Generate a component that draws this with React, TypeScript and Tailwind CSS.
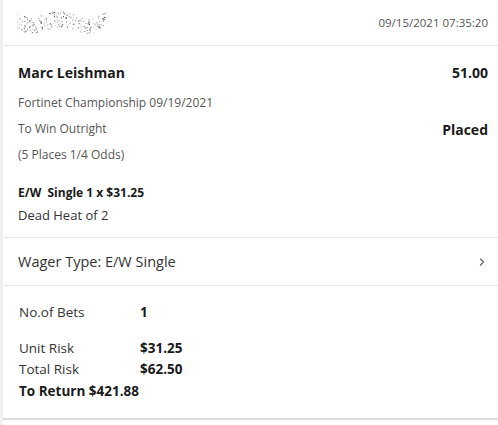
import { ChevronRight } from "lucide-react";

// blurred account name: deterministic speckle
const dots = Array.from({ length: 220 }, (_, i) => {
  const a = Math.sin(i * 12.9898) * 43758.5453;
  const b = Math.sin(i * 78.233) * 12345.6789;
  const x = (a - Math.floor(a)) * 88;
  const y = 6 + (b - Math.floor(b)) * 16 + Math.sin(x / 9) * 3;
  const o = 0.25 + ((a * 7) % 1 + 1) % 1 * 0.6;
  return { x, y, o };
});

const Speckle = () => (
  <svg width="90" height="30" viewBox="0 0 90 30">
    {dots.map((d, i) => (
      <rect key={i} x={d.x} y={d.y} width="1" height="1" fill="#333" opacity={d.o} />
    ))}
  </svg>
);

const App = () => {
  return (
    <div
      className="w-[498px] h-[425px] bg-white border-l-[3px] border-[#f0f0f0] text-[#222] overflow-hidden"
      style={{ fontFamily: '"Open Sans", "Noto Sans", sans-serif' }}
    >
      <div className="h-[46px] flex items-center justify-between pl-[14px] pr-[10px] border-b border-[#e6e6e6]">
        <Speckle />
        <span className="text-[11.5px] text-[#555]">09/15/2021 07:35:20</span>
      </div>

      <div className="pl-[15px] pr-[10px] pt-[15px] pb-[10px] border-b border-[#e6e6e6]">
        <div className="flex justify-between items-center h-[22px]">
          <span className="text-[14px] font-bold text-[#1a1a1a]">Marc Leishman</span>
          <span className="text-[14px] font-bold text-[#1a1a1a]">51.00</span>
        </div>
        <div className="mt-[9px] h-[22px] flex items-center text-[12px] text-[#555]">
          Fortinet Championship 09/19/2021
        </div>
        <div className="mt-[4px] h-[22px] flex justify-between items-center">
          <span className="text-[12px] text-[#555]">To Win Outright</span>
          <span className="text-[14px] font-bold text-[#1a1a1a]">Placed</span>
        </div>
        <div className="mt-[4px] h-[22px] flex items-center text-[12px] text-[#555]">
          (5 Places 1/4 Odds)
        </div>
        <div className="mt-[17px] h-[20px] flex items-center text-[12px] font-bold text-[#1a1a1a] whitespace-pre">
          {"E/W  Single 1 x $31.25"}
        </div>
        <div className="mt-[2px] h-[22px] flex items-center text-[13px] text-[#333]">Dead Heat of 2</div>
      </div>

      <div className="h-[48px] flex items-center justify-between pl-[15px] pr-[10px] border-b border-[#e6e6e6]">
        <span className="text-[14.5px] text-[#333]">Wager Type: E/W Single</span>
        <ChevronRight size={12} strokeWidth={2.5} className="text-[#666]" />
      </div>

      <div className="pl-[16px] pt-[15px] pb-[16px] border-b-2 border-[#dcdcdc] text-[13.5px]">
        <div className="grid grid-cols-[121px_1fr] h-[22px] items-center">
          <span className="text-[#333]">No.of Bets</span>
          <span className="font-bold text-[#1a1a1a]">1</span>
        </div>
        <div className="grid grid-cols-[121px_1fr] h-[22px] items-center mt-[14px]">
          <span className="text-[#333]">Unit Risk</span>
          <span className="font-bold text-[#1a1a1a]">$31.25</span>
        </div>
        <div className="grid grid-cols-[121px_1fr] h-[21px] items-center">
          <span className="text-[#333]">Total Risk</span>
          <span className="font-bold text-[#1a1a1a]">$62.50</span>
        </div>
        <div className="h-[22px] flex items-center font-bold text-[#1a1a1a]">To Return $421.88</div>
      </div>
    </div>
  );
};

export default App;
